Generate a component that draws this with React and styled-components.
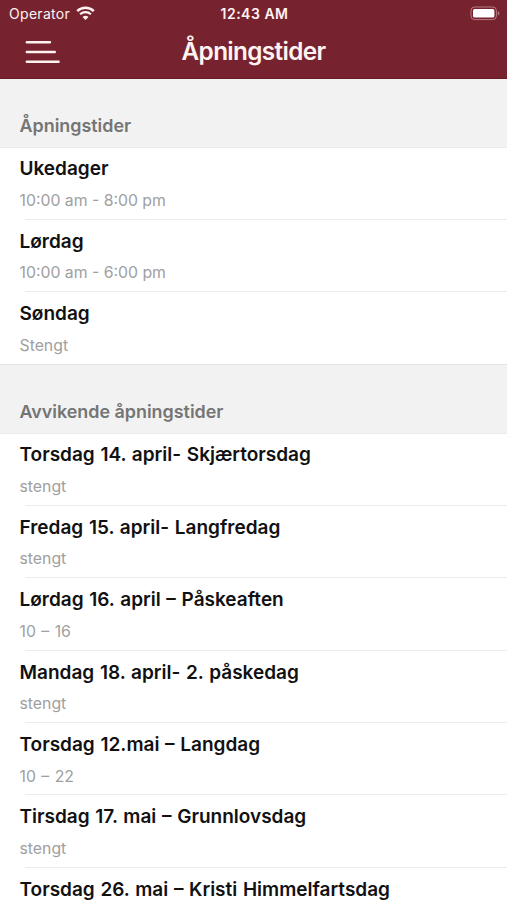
import React from "react";
import styled, { createGlobalStyle } from "styled-components";

const colors = {
  maroon: "#77232f",
  cream: "#fff3f2",
  sectionBg: "#f2f2f2",
  divider: "#ebebeb",
  heading: "#757575",
  title: "#111112",
  detail: "#a0a0a0",
};

const GlobalStyle = createGlobalStyle`
  * {
    box-sizing: border-box;
  }

  body {
    margin: 0;
    background: #fff;
    font-family: Inter, "Liberation Sans", sans-serif;
  }
`;

const Screen = styled.div`
  width: 100%;
  height: 100vh;
  overflow: hidden;
  background: #fff;
`;

const Header = styled.header`
  height: 79px;
  background: ${colors.maroon};
  color: ${colors.cream};
  border-bottom: 1px solid #6a1b28;
`;

const StatusBar = styled.div`
  height: 27px;
  padding: 0 7px 0 9px;
  display: grid;
  grid-template-columns: 1fr auto 1fr;
  align-items: center;
`;

const Carrier = styled.div`
  display: flex;
  align-items: center;
  gap: 6px;
  font-size: 14px;
  line-height: 27px;
  letter-spacing: 0.3px;
`;

const Clock = styled.div`
  font-size: 14px;
  font-weight: 600;
  line-height: 27px;
  letter-spacing: 0.5px;
`;

const Battery = styled.svg`
  justify-self: end;
`;

const NavBar = styled.div`
  height: 50px;
  padding: 0 25px;
  display: grid;
  grid-template-columns: 1fr auto 1fr;
  align-items: center;
`;

const MenuButton = styled.button`
  width: 35px;
  height: 24px;
  padding: 0;
  display: flex;
  border: 0;
  background: none;
  color: inherit;
`;

const PageTitle = styled.h1`
  margin: 0;
  padding-bottom: 2px;
  font-size: 24.3px;
  font-weight: 600;
  line-height: 48px;
  letter-spacing: -0.65px;
`;

const SectionHeading = styled.h2`
  height: 69px;
  margin: 0;
  padding: 0 19.5px 9px;
  display: flex;
  align-items: flex-end;
  background: ${colors.sectionBg};
  border-bottom: 1px solid ${colors.divider};
  color: ${colors.heading};
  font-size: 17.9px;
  font-weight: 600;
  line-height: 24px;
`;

const List = styled.ul`
  margin: 0;
  padding: 0;
  list-style: none;
`;

const Row = styled.li`
  height: 72.4px;
  padding: 8.3px 0 0 19.5px;

  &::after {
    content: "";
    display: block;
    height: 1px;
    margin: 5.8px 0 0 5.5px;
    background: ${colors.divider};
  }

  &:last-child::after {
    margin: 6.5px 0 0 -19.5px;
    background: #e4e4e4;
  }
`;

const RowTitle = styled.div`
  color: ${colors.title};
  font-size: 19px;
  font-weight: 600;
  line-height: 26px;
  word-spacing: 0.9px;
  white-space: nowrap;
`;

const RowDetail = styled.div`
  margin-top: 6.6px;
  color: ${colors.detail};
  font-size: 15.8px;
  line-height: 24px;
  word-spacing: ${({ $range }) => ($range ? "1px" : "0")};
`;

const sections = [
  {
    heading: "Åpningstider",
    rows: [
      { title: "Ukedager", detail: "10:00 am - 8:00 pm" },
      { title: "Lørdag", detail: "10:00 am - 6:00 pm" },
      { title: "Søndag", detail: "Stengt" },
    ],
  },
  {
    heading: "Avvikende åpningstider",
    rows: [
      { title: "Torsdag 14. april- Skjærtorsdag", detail: "stengt" },
      { title: "Fredag 15. april- Langfredag", detail: "stengt" },
      { title: "Lørdag 16. april – Påskeaften", detail: "10 – 16" },
      { title: "Mandag 18. april- 2. påskedag", detail: "stengt" },
      { title: "Torsdag 12.mai – Langdag", detail: "10 – 22" },
      { title: "Tirsdag 17. mai – Grunnlovsdag", detail: "stengt" },
      { title: "Torsdag 26. mai – Kristi Himmelfartsdag" },
    ],
  },
];

const WifiIcon = () => (
  <svg width="19" height="15" viewBox="0 0 19 15" fill="none">
    <path d="M1.2 5.1a12 12 0 0 1 16.6 0" stroke="currentColor" strokeWidth="2.4" />
    <path d="M4.1 8.3a7.8 7.8 0 0 1 10.8 0" stroke="currentColor" strokeWidth="2.2" />
    <path d="M6.5 11.1a4.4 4.4 0 0 1 6 0l-3 3z" fill="currentColor" />
  </svg>
);

const BatteryIcon = () => (
  <Battery width="30" height="15" viewBox="0 0 30 15" fill="none">
    <rect x="1" y="1" width="25.4" height="12.6" rx="3.6" stroke="#b77b83" />
    <rect x="3" y="3" width="21.4" height="8.6" rx="1.7" fill="#fff" />
    <path d="M27.8 5.2v4.2c1-.4 1.6-1.2 1.6-2.1s-.6-1.7-1.6-2.1z" fill="#b77b83" />
  </Battery>
);

const MenuIcon = () => (
  <svg width="35" height="24" viewBox="0 0 35 24" fill="none">
    <path
      d="M1.8 2.2H25M1.8 12H29.8M1.8 21.7H33.6"
      stroke="currentColor"
      strokeWidth="2.4"
      strokeLinecap="round"
    />
  </svg>
);

const Section = ({ heading, rows }) => (
  <section>
    <SectionHeading>{heading}</SectionHeading>
    <List>
      {rows.map(({ title, detail }) => (
        <Row key={title}>
          <RowTitle>{title}</RowTitle>
          {detail && (
            <RowDetail $range={detail.includes("–")}>{detail}</RowDetail>
          )}
        </Row>
      ))}
    </List>
  </section>
);

const App = () => {
  return (
    <Screen>
      <GlobalStyle />
      <Header>
        <StatusBar>
          <Carrier>
            Operator
            <WifiIcon />
          </Carrier>
          <Clock>12:43 AM</Clock>
          <BatteryIcon />
        </StatusBar>
        <NavBar>
          <MenuButton aria-label="Meny">
            <MenuIcon />
          </MenuButton>
          <PageTitle>Åpningstider</PageTitle>
        </NavBar>
      </Header>
      {sections.map((section) => (
        <Section key={section.heading} {...section} />
      ))}
    </Screen>
  );
};

export default App;
